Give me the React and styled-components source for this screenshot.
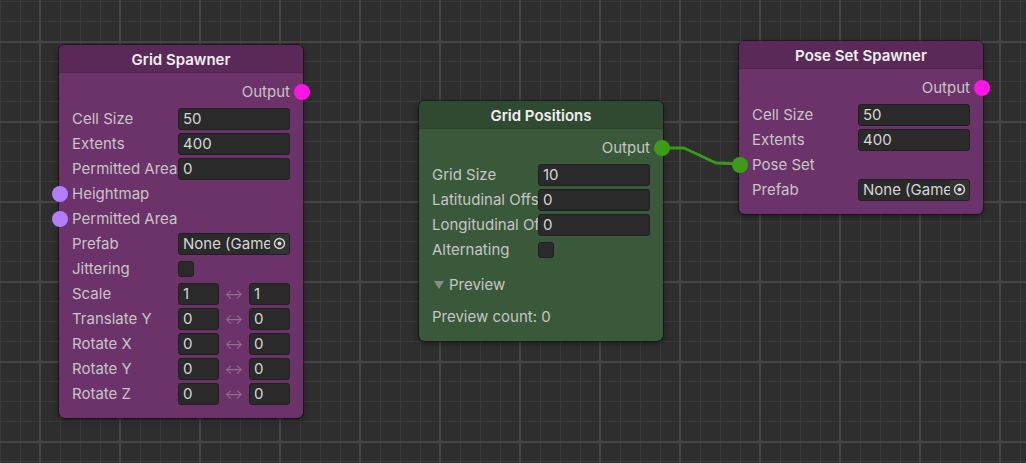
import React from 'react';
import styled, {createGlobalStyle, css} from 'styled-components';

const GlobalStyle = createGlobalStyle`
	html, body {
		margin: 0;
		padding: 0;
		background: #2e2e2e;
	}
	body {
		font-family: Inter, "Noto Sans", "Liberation Sans", sans-serif;
	}
`;

const tones = {
	purple: {head: '#5b2958', body: '#6c326a'},
	green: {head: '#304a31', body: '#3a583a'},
};

const portColors = {
	magenta: '#ff14e6',
	lilac: '#b37cfb',
	green: '#3c9c16',
};

const Canvas = styled.div`
	position: relative;
	width: 1026px;
	height: 463px;
	overflow: hidden;
	background-color: #2e2e2e;
	background-image:
		linear-gradient(to right, #464646 2px, transparent 2px),
		linear-gradient(to bottom, #464646 2px, transparent 2px),
		linear-gradient(to right, #3a3a3a 1px, transparent 1px),
		linear-gradient(to bottom, #3a3a3a 1px, transparent 1px);
	background-size: 80px 80px, 80px 80px, 20px 20px, 20px 20px;
	background-position: 39px 0, 0 41px, 0 0, 0 1px;
`;

const Wires = styled.svg`
	position: absolute;
	left: 0;
	top: 0;
	pointer-events: none;
`;

const NodeBox = styled.div`
	position: absolute;
	left: ${p => p.$x}px;
	top: ${p => p.$y}px;
	width: 244px;
	border-radius: 6px;
	background: ${p => tones[p.$tone].body};
	box-shadow: 0 0 0 1px rgba(0, 0, 0, 0.35), 0 2px 6px rgba(0, 0, 0, 0.45);
	display: flex;
	flex-direction: column;
`;

const NodeHead = styled.div`
	box-sizing: border-box;
	height: 28px;
	padding-top: 2px;
	display: flex;
	align-items: center;
	justify-content: center;
	background: ${p => tones[p.$tone].head};
	border-radius: 6px 6px 0 0;
	border-bottom: 1px solid rgba(0, 0, 0, 0.12);
	color: #f0f0f0;
	font-size: 15px;
	font-weight: 600;
`;

const NodeBody = styled.div`
	display: flex;
	flex-direction: column;
	padding: 5px 13px 12px 13px;
`;

const Row = styled.div`
	position: relative;
	height: 25px;
	display: flex;
	align-items: center;
	color: #c6c6c6;
	font-size: 15px;
	${p => p.$right && css`
		height: 27px;
		margin-bottom: 1px;
		justify-content: flex-end;
	`}
`;

const Label = styled.div`
	width: 106px;
	flex: none;
	white-space: nowrap;
	overflow: hidden;
`;

const Port = styled.span`
	position: absolute;
	top: 50%;
	width: 16px;
	height: 16px;
	border-radius: 50%;
	background: ${p => portColors[p.$color]};
	transform: translate(-50%, -50%);
	${p => p.$side === 'right' ? css`left: calc(100% + 12px);` : css`left: -12px;`}
`;

const Field = styled.div`
	box-sizing: border-box;
	width: ${p => p.$w || 112}px;
	height: 22px;
	flex: none;
	display: flex;
	align-items: center;
	padding-left: 4px;
	background: #2a2a2a;
	border: 1px solid #202020;
	border-radius: 3px;
	color: #d6d6d6;
	font-size: 15px;
	overflow: hidden;
	white-space: nowrap;
	${p => p.$object && css`padding-right: 0;`}
`;

const ObjectText = styled.span`
	flex: 1;
	overflow: hidden;
	white-space: nowrap;
`;

const PickerButton = styled.span`
	flex: none;
	width: 19px;
	height: 100%;
	display: flex;
	align-items: center;
	justify-content: center;
	background: #333333;
`;

const Check = styled.div`
	box-sizing: border-box;
	width: 16px;
	height: 16px;
	background: #2a2a2a;
	border: 1px solid #202020;
	border-radius: 3px;
`;

const Swap = styled.span`
	width: 30px;
	text-align: center;
	color: rgba(210, 210, 210, 0.38);
	font-size: 14px;
`;

const Foldout = styled.div`
	height: 25px;
	margin-top: 10px;
	display: flex;
	align-items: center;
	gap: 5px;
	color: #c6c6c6;
	font-size: 15px;
`;

const Arrow = styled.span`
	width: 0;
	height: 0;
	border-left: 5px solid transparent;
	border-right: 5px solid transparent;
	border-top: 8px solid #8c8c8c;
	margin-left: 2px;
`;

const Note = styled.div`
	height: 25px;
	margin-top: 7px;
	display: flex;
	align-items: center;
	color: #c6c6c6;
	font-size: 15px;
`;

const Node = ({x, y, tone = 'purple', title, children}) => (
	<NodeBox $x={x} $y={y} $tone={tone}>
		<NodeHead $tone={tone}>{title}</NodeHead>
		<NodeBody>{children}</NodeBody>
	</NodeBox>
);

const Output = ({color}) => (
	<Row $right>
		<span>Output</span>
		<Port $side="right" $color={color}/>
	</Row>
);

const ValueRow = ({label, value}) => (
	<Row>
		<Label>{label}</Label>
		<Field>{value}</Field>
	</Row>
);

const InputRow = ({label, color}) => (
	<Row>
		<Port $color={color}/>
		<Label>{label}</Label>
	</Row>
);

const PickerIcon = () => (
	<svg width="13" height="13" viewBox="0 0 13 13">
		<circle cx="6.5" cy="6.5" r="5" fill="none" stroke="#d8d8d8" strokeWidth="1.4"/>
		<circle cx="6.5" cy="6.5" r="2" fill="#d8d8d8"/>
	</svg>
);

const ObjectRow = ({label}) => (
	<Row>
		<Label>{label}</Label>
		<Field $object>
			<ObjectText>None (GameObject)</ObjectText>
			<PickerButton><PickerIcon/></PickerButton>
		</Field>
	</Row>
);

const CheckRow = ({label}) => (
	<Row>
		<Label>{label}</Label>
		<Check/>
	</Row>
);

const RangeRow = ({label, min, max}) => (
	<Row>
		<Label>{label}</Label>
		<Field $w={41}>{min}</Field>
		<Swap>↔</Swap>
		<Field $w={41}>{max}</Field>
	</Row>
);

export default function App() {
	return (
		<>
			<GlobalStyle/>
			<Canvas>
				<Wires width="1026" height="463">
					<polyline points="660,148 684,148 716,163 740,164" fill="none" stroke="#3a9a18"
					          strokeWidth="3" strokeLinejoin="round" strokeLinecap="round"/>
				</Wires>

				<Node x={59} y={45} title="Grid Spawner">
					<Output color="magenta"/>
					<ValueRow label="Cell Size" value="50"/>
					<ValueRow label="Extents" value="400"/>
					<ValueRow label="Permitted Area" value="0"/>
					<InputRow label="Heightmap" color="lilac"/>
					<InputRow label="Permitted Area" color="lilac"/>
					<ObjectRow label="Prefab"/>
					<CheckRow label="Jittering"/>
					<RangeRow label="Scale" min="1" max="1"/>
					<RangeRow label="Translate Y" min="0" max="0"/>
					<RangeRow label="Rotate X" min="0" max="0"/>
					<RangeRow label="Rotate Y" min="0" max="0"/>
					<RangeRow label="Rotate Z" min="0" max="0"/>
				</Node>

				<Node x={419} y={101} tone="green" title="Grid Positions">
					<Output color="green"/>
					<ValueRow label="Grid Size" value="10"/>
					<ValueRow label="Latitudinal Offset" value="0"/>
					<ValueRow label="Longitudinal Offset" value="0"/>
					<CheckRow label="Alternating"/>
					<Foldout><Arrow/>Preview</Foldout>
					<Note>Preview count: 0</Note>
				</Node>

				<Node x={739} y={41} title="Pose Set Spawner">
					<Output color="magenta"/>
					<ValueRow label="Cell Size" value="50"/>
					<ValueRow label="Extents" value="400"/>
					<InputRow label="Pose Set" color="green"/>
					<ObjectRow label="Prefab"/>
				</Node>
			</Canvas>
		</>
	);
}
